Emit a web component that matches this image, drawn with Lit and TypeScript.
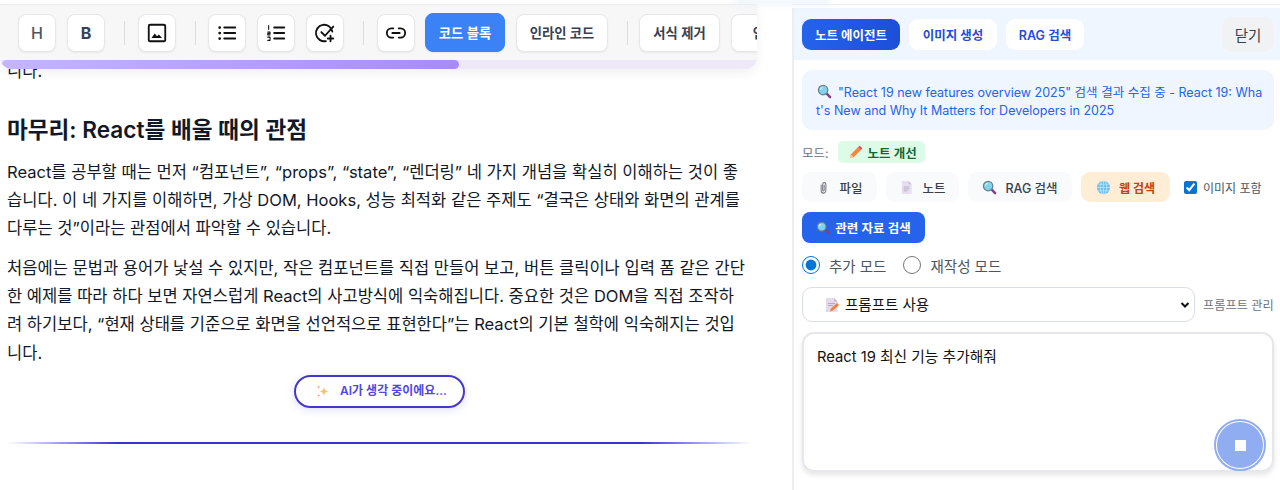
import { LitElement, html, css, svg } from "lit";
import { customElement } from "lit/decorators.js";

const mag = (s = 15) => html`<svg class="emoji" width=${s} height=${s} viewBox="0 0 16 16"><path d="M9.8 9.8l4.2 4.2" stroke="#7b3f8c" stroke-width="2.6" stroke-linecap="round"/><circle cx="6.5" cy="6.5" r="5" fill="#7fd3ea" stroke="#6a7f8c" stroke-width="1.3"/><path d="M3.6 6a3 3 0 0 1 2.4-2.4" stroke="#d8f4fb" stroke-width="1.2" fill="none"/></svg>`;
const pencil = html`<svg class="emoji" width="15" height="15" viewBox="0 0 16 16"><path d="M2 14l1-4 7.5-7.5 3 3L6 13z" fill="#f4883a"/><path d="M2 14l1-4 3 3z" fill="#f3d0a6"/><path d="M10.5 2.5l1.3-1.3a1 1 0 0 1 1.4 0l1.6 1.6a1 1 0 0 1 0 1.4l-1.3 1.3z" fill="#e8546a"/></svg>`;
const clip = html`<svg class="emoji" width="15" height="15" viewBox="0 0 16 16"><path d="M5.5 5v6.5a2.5 2.5 0 0 0 5 0V4.5a1.7 1.7 0 0 0-3.4 0V11a.8.8 0 0 0 1.6 0V5" fill="none" stroke="#7a7a80" stroke-width="1.1"/></svg>`;
const doc = html`<svg class="emoji" width="15" height="15" viewBox="0 0 16 16"><path d="M3 1h7l3.500 3.500V15H3z" fill="#e6dfef"/><path d="M10 1l3.500 3.500H10z" fill="#c9bdd8"/><path d="M5 7.500h6M5 9.500h6M5 11.500h4" stroke="#b8adc6" stroke-width="1"/></svg>`;
const globe = html`<svg class="emoji" width="15" height="15" viewBox="0 0 16 16"><circle cx="8" cy="8" r="7" fill="#6cc0ee"/><path d="M1 8h14M8 1v14M2.200 4.500h11.600M2.200 11.500h11.600" stroke="#bfe5f8" stroke-width=".8"/><ellipse cx="8" cy="8" rx="3.500" ry="7" fill="none" stroke="#bfe5f8" stroke-width=".8"/></svg>`;
const sparkle = html`<svg class="emoji" width="15" height="15" viewBox="0 0 16 16"><path d="M9.500 3c.6 3.400 1.600 4.400 5 5-3.400.6-4.400 1.600-5 5-.6-3.400-1.600-4.400-5-5 3.400-.6 4.400-1.600 5-5z" fill="#fbbf6c"/><path d="M4 1c.3 1.500.7 1.900 2 2.200-1.300.3-1.700.7-2 2.200-.3-1.500-.7-1.900-2-2.200 1.300-.3 1.700-.7 2-2.200zM4 10.500c.2 1.100.6 1.500 1.700 1.700-1.100.2-1.500.6-1.700 1.700-.2-1.100-.6-1.500-1.700-1.700 1.100-.2 1.500-.6 1.700-1.700z" fill="#f9a58a"/></svg>`;
const memo = html`<svg class="emoji" width="16" height="16" viewBox="0 0 16 16"><path d="M2 1h8l3.500 3.500V15H2z" fill="#e3dbe9"/><path d="M10 1l3.500 3.500H10z" fill="#c5b8d2"/><path d="M4 6.500h7M4 8.500h5" stroke="#b4a8c2"/><path d="M6 14.500l1-3 6-5.500 2 2-6 5.500z" fill="#f0803c"/></svg>`;

const icon = (body: unknown) => html`<svg class="ico" width="22" height="22" viewBox="0 0 24 24" fill="none" stroke="#111" stroke-width="2" stroke-linecap="round" stroke-linejoin="round">${body}</svg>`;
const imgI = icon(svg`<rect x="3" y="3" width="18" height="18" rx="1.500"/><path d="M6 17.500l3.500-5 2.500 3 2-2 3.500 4z" fill="#111" stroke="none"/>`);
const ulI = icon(svg`<path d="M9 6h12M9 12h12M9 18h12"/><path d="M4 6h.01M4 12h.01M4 18h.01" stroke-width="3"/>`);
const olI = icon(svg`<path d="M10 6h11M10 12h11M10 18h11"/><path d="M4 4v4M3 11h2.500v1.500H3V14h2.500M3 16.500h2.500V20H3" stroke-width="1.200"/>`);
const chkI = icon(svg`<path d="M20 10.500A9 9 0 1 0 13 20.800"/><path d="M8 11l4 4 9-10"/><path d="M18 15v6M15 18h6"/>`);
const linkI = icon(svg`<path d="M9 7H7a5 5 0 0 0 0 10h2M15 7h2a5 5 0 0 1 0 10h-2M8 12h8"/>`);

@customElement("app-root")
export class AppRoot extends LitElement {
  static styles = css`
    :host { display: grid; grid-template-columns: 792px 488px; height: 490px; overflow: hidden; background: #fff; position: relative;
      font-family: Inter, "Noto Sans CJK KR", sans-serif; color: #111827; }
    * { box-sizing: border-box; }
    .emoji { flex: none; display: block; }
    .glow { position: absolute; left: 735px; top: 0; width: 95px; height: 4px; background: #e6effc; filter: blur(3px); z-index: 3; }
    .left { padding-top: 4px; overflow: hidden; height: 490px; }
    .toolbar { position: relative; z-index: 2; width: 757px; height: 65px; background: #f7f7f7; border-top: 1px solid #ececec;
      border-radius: 0 0 12px 12px; box-shadow: 0 4px 12px rgba(0,0,0,.06); overflow: hidden; display: flex; flex-direction: column; }
    .tools { display: flex; align-items: center; gap: 11px; padding: 0 0 0 18px; height: 55px; width: 800px; flex: none; }
    .btn { height: 38px; min-width: 38px; flex: none; display: flex; align-items: center; justify-content: center; background: #fff;
      border: 1px solid #e5e7eb; border-radius: 8px; font-size: 13.300px; font-weight: 600; color: #374151; box-shadow: 0 1px 2px rgba(0,0,0,.06); }
    .btn.letter { font-size: 16px; color: #4b5563; font-weight: 500; }
    .btn.b { font-weight: 700; color: #374151; }
    .btn.on { background: #3b82f6; border-color: #3b82f6; color: #fff; height: 39px; width: 80px; margin-left: -1px; }
    .w92 { width: 92px; }
    .w81 { width: 81px; }
    .w68 { width: 68px; }
    .sep { width: 1px; height: 24px; background: #dcdcdc; margin: 0 0 0 9px; flex: none; }
    .sep.a { margin: 0 2px 0 8px; }
    .sep.b { margin: 0 1px 0 8px; }
    .sep.c { margin: 0 0 0 8px; }
    .track { height: 9px; background: #ede9f8; flex: none; padding-left: 2px; }
    .thumb { width: 457px; height: 9px; border-radius: 5px; background: linear-gradient(90deg, #c4b5fd, #a78bfa); }
    .article { width: 745px; margin: -12px 0 0 7px; font-size: 16.550px; line-height: 28.300px; color: #111827; }
    .article p { margin: 0 0 11px; padding-right: 3px; }
    .article h2 { font-size: 22.600px; font-weight: 600; line-height: 30px; margin: 30px 0 12.500px; color: #111827; }
    .pill-row { display: flex; justify-content: center; margin-top: -3px; }
    .pill { width: 171px; height: 33px; border: 2px solid #4338ca; border-radius: 17px; display: flex; align-items: center; gap: 10px;
      padding-left: 19px; font-size: 12px; font-weight: 600; color: #4f46e5; box-shadow: 0 2px 8px rgba(79,70,229,.18); line-height: 16px; }
    .rule { height: 2px; margin-top: 34.500px; background: linear-gradient(90deg, transparent, #3730e0 15%, #3730e0 85%, transparent); }
    .right { padding-top: 4px; display: flex; flex-direction: column; height: 490px; }
    .topline { height: 1px; background: #eceef0; margin-bottom: 3px; flex: none; }
    .panel { border-left: 2px solid #eceef2; flex: 1; display: flex; flex-direction: column; }
    .head { height: 52px; background: #eff6ff; display: flex; align-items: center; gap: 9px; padding: 0 6px 0 8px; }
    .tab { height: 31px; display: flex; align-items: center; justify-content: center; border-radius: 9px; background: #fff; color: #1d4ed8; font-size: 12.500px; font-weight: 600; }
    .tab.on { background: linear-gradient(90deg, #2563eb, #1d4ed8); color: #fff; }
    .t98 { width: 98px; }
    .t88 { width: 88px; }
    .t78 { width: 78px; }
    .close { margin-left: auto; width: 52px; height: 35px; border-radius: 10px; background: #f1f2f4; color: #374151; font-size: 14.500px; display: flex; align-items: center; justify-content: center; }
    .body { padding: 10px 6px 0 8px; display: flex; flex-direction: column; }
    .status { height: 60px; background: #eff6ff; border-radius: 10px; padding: 14px 10px 14px 14px; font-size: 12.500px; line-height: 17.500px; color: #2563eb; word-break: break-all; }
    .status .emoji { display: inline-block; vertical-align: -2px; margin: 0 6px 0 1px; }
    .mode { display: flex; align-items: center; gap: 9px; margin-top: 11px; font-size: 12.500px; color: #6b7280; height: 22px; }
    .badge { height: 22px; width: 87px; border-radius: 5px; background: #dcfce7; color: #166534; font-weight: 600; font-size: 12.500px; display: flex; align-items: center; gap: 5px; padding-left: 10px; }
    .chips { display: flex; align-items: center; gap: 9px; margin-top: 9px; height: 30px; }
    .chip { height: 30px; border-radius: 9px; background: #f8fafc; color: #374151; font-size: 12.500px; font-weight: 500; display: flex; align-items: center; justify-content: center; gap: 8px; }
    .chip.active { background: #ffedd5; color: #c2410c; font-weight: 600; font-size: 12px; }
    .check { display: flex; align-items: center; gap: 6px; font-size: 12px; color: #4b5563; margin-left: 5px; }
    .check input { margin: 0; width: 13px; height: 13px; accent-color: #0075d5; }
    .search { width: 123px; height: 31px; margin-top: 10px; border-radius: 8px; background: #2563eb; color: #fff; font-size: 12.500px; font-weight: 600; display: flex; align-items: center; justify-content: center; gap: 5px; }
    .radios { display: flex; align-items: center; height: 18px; margin-top: 13px; font-size: 14.500px; color: #4b5563; }
    .radios input { width: 18px; height: 18px; margin: 0 9px 0 0; accent-color: #0075d5; }
    .radios span { margin-right: 17px; }
    .prompt { display: flex; align-items: center; gap: 8px; margin-top: 13px; }
    .select { width: 393px; height: 35px; border: 1px solid #d9dde6; border-radius: 10px; display: flex; align-items: center; gap: 5px; padding: 0 4px 0 21px; font-size: 14.500px; font-weight: 400; color: #111; }
    .select > span { padding-bottom: 3px; }
    .select svg:last-child { margin-left: auto; }
    .manage { font-size: 12.200px; color: #6b7280; white-space: nowrap; }
    .inputbox { position: relative; margin-top: 10px; height: 140px; border: 2px solid #e5e7eb; border-radius: 12px; padding: 13px; font-size: 14.750px; line-height: 20px; color: #111; box-shadow: 0 3px 5px rgba(0,0,0,.1); }
    .stop { position: absolute; right: 7px; bottom: 0px; width: 50px; height: 50px; border-radius: 50%; background: #8fadf0; border: 2px solid #fff; outline: 2px solid #8fadf0; outline-offset: -1px; display: flex; align-items: center; justify-content: center; }
    .stop i { width: 11px; height: 11px; background: #fff; display: block; }
  `;

  render() {
    return html`
      <div class="glow"></div>
      <div class="left">
        <div class="toolbar">
          <div class="tools">
            <div class="btn letter">H</div><div class="btn letter b">B</div><div class="sep a"></div>
            <div class="btn">${imgI}</div><div class="sep b"></div>
            <div class="btn">${ulI}</div><div class="btn">${olI}</div><div class="btn">${chkI}</div><div class="sep a"></div>
            <div class="btn">${linkI}</div>
            <div class="btn on">코드 블록</div><div class="btn w92">인라인 코드</div><div class="sep c"></div>
            <div class="btn w81">서식 제거</div><div class="btn w68">인용</div>
          </div>
          <div class="track"><div class="thumb"></div></div>
        </div>
        <div class="article">
          <p>니다.</p>
          <h2>마무리: React를 배울 때의 관점</h2>
          <p>React를 공부할 때는 먼저 “컴포넌트”, “props”, “state”, “렌더링” 네 가지 개념을 확실히 이해하는 것이 좋습니다. 이 네 가지를 이해하면, 가상 DOM, Hooks, 성능 최적화 같은 주제도 “결국은 상태와 화면의 관계를 다루는 것”이라는 관점에서 파악할 수 있습니다.</p>
          <p>처음에는 문법과 용어가 낯설 수 있지만, 작은 컴포넌트를 직접 만들어 보고, 버튼 클릭이나 입력 폼 같은 간단한 예제를 따라 하다 보면 자연스럽게 React의 사고방식에 익숙해집니다. 중요한 것은 DOM을 직접 조작하려 하기보다, “현재 상태를 기준으로 화면을 선언적으로 표현한다”는 React의 기본 철학에 익숙해지는 것입니다.</p>
          <div class="pill-row"><div class="pill">${sparkle}<span>AI가 생각 중이에요...</span></div></div>
          <div class="rule"></div>
        </div>
      </div>
      <div class="right">
        <div class="topline"></div>
        <div class="panel">
          <div class="head">
            <div class="tab on t98">노트 에이전트</div><div class="tab t88">이미지 생성</div><div class="tab t78">RAG 검색</div>
            <div class="close">닫기</div>
          </div>
          <div class="body">
            <div class="status">${mag(15)}"React 19 new features overview 2025" 검색 결과 수집 중 - React 19: What's New and Why It Matters for Developers in 2025</div>
            <div class="mode"><span>모드:</span><div class="badge">${pencil}노트 개선</div></div>
            <div class="chips">
              <div class="chip" style="width:75px">${clip}파일</div>
              <div class="chip" style="width:73px">${doc}노트</div>
              <div class="chip" style="width:104px">${mag(15)}RAG 검색</div>
              <div class="chip active" style="width:89px">${globe}웹 검색</div>
              <label class="check"><input type="checkbox" checked />이미지 포함</label>
            </div>
            <div class="search">${mag(14)}관련 자료 검색</div>
            <div class="radios">
              <input type="radio" name="m" checked /><span>추가 모드</span>
              <input type="radio" name="m" /><span>재작성 모드</span>
            </div>
            <div class="prompt">
              <div class="select">${memo}<span>프롬프트 사용</span>
                <svg width="10" height="10" viewBox="0 0 10 10"><path d="M1.500 3l3.500 3.500L8.500 3" fill="none" stroke="#111" stroke-width="2"/></svg></div>
              <span class="manage">프롬프트 관리</span>
            </div>
            <div class="inputbox">React 19 최신 기능 추가해줘
              <div class="stop"><i></i></div>
            </div>
          </div>
        </div>
      </div>
    `;
  }
}
